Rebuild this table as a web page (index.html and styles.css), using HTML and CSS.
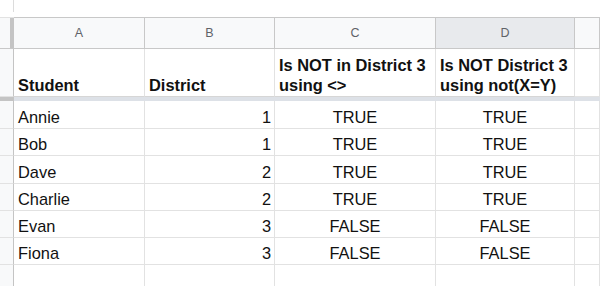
FILE: index.html
```html
<!DOCTYPE html>
<html>
<head>
<meta charset="utf-8">
<link rel="stylesheet" href="styles.css">
</head>
<body>
<div class="sheet">
  <div class="top rn"><span class="tick"></span></div>
  <div class="top span"></div>

  <div class="ch rn ch-rn"></div>
  <div class="ch">A</div>
  <div class="ch">B</div>
  <div class="ch">C</div>
  <div class="ch sel">D</div>
  <div class="ch">&nbsp;</div>

  <div class="rn"></div>
  <div class="cell hd">Student</div>
  <div class="cell hd">District</div>
  <div class="cell hd">Is NOT in District 3<br>using &lt;&gt;</div>
  <div class="cell hd">Is NOT District 3<br>using not(X=Y)</div>
  <div class="cell"></div>

  <div class="bar bar-rn"></div>
  <div class="bar bar-main"></div>

  <div class="rn"></div><div class="cell">Annie</div><div class="cell num">1</div><div class="cell mid">TRUE</div><div class="cell mid">TRUE</div><div class="cell"></div>
  <div class="rn"></div><div class="cell">Bob</div><div class="cell num">1</div><div class="cell mid">TRUE</div><div class="cell mid">TRUE</div><div class="cell"></div>
  <div class="rn"></div><div class="cell">Dave</div><div class="cell num">2</div><div class="cell mid">TRUE</div><div class="cell mid">TRUE</div><div class="cell"></div>
  <div class="rn"></div><div class="cell">Charlie</div><div class="cell num">2</div><div class="cell mid">TRUE</div><div class="cell mid">TRUE</div><div class="cell"></div>
  <div class="rn"></div><div class="cell">Evan</div><div class="cell num">3</div><div class="cell mid">FALSE</div><div class="cell mid">FALSE</div><div class="cell"></div>
  <div class="rn"></div><div class="cell">Fiona</div><div class="cell num">3</div><div class="cell mid">FALSE</div><div class="cell mid">FALSE</div><div class="cell"></div>
  <div class="rn"></div><div class="cell"></div><div class="cell"></div><div class="cell"></div><div class="cell"></div><div class="cell"></div>
</div>
</body>
</html>
```

FILE: styles.css
```css
html, body {
  margin: 0;
  padding: 0;
  background: #ffffff;
  overflow: hidden;
}

.sheet {
  width: 600px;
  height: 286px;
  overflow: hidden;
  display: grid;
  grid-template-columns: 14px 131px 130px 161px 139px 25px;
  grid-template-rows: 18px 31px 48px 4px 28px 27px 28px 27px 27px 27px 27px;
  font-family: "Liberation Sans", Arial, sans-serif;
  color: #111111;
}

.top {
  background: #ffffff;
  border-bottom: 1px solid #c8c8c8;
}
.top.span {
  grid-column: 2 / -1;
}
.tick {
  display: block;
  width: 13px;
  height: 12px;
  border-right: 1px solid #dcdcdc;
}
.top.rn {
  background: #ffffff;
  border-right: none;
}

.rn {
  background: #f8f9fa;
  border-right: 1px solid #c4c4c4;
  border-bottom: 1px solid #e2e2e2;
}

.ch {
  background: #f8f9fa;
  border-right: 1px solid #c8c8c8;
  border-bottom: 1px solid #c8c8c8;
  color: #5f6368;
  font-size: 12.5px;
  display: flex;
  align-items: center;
  justify-content: center;
}
.ch.sel {
  background: #e8eaed;
}
.ch-rn {
  border-right: 1px solid #c4c4c4;
  box-shadow: inset -3px 0 0 #c4c4c4;
}

.cell {
  background: #ffffff;
  border-right: 1px solid #e2e2e2;
  border-bottom: 1px solid #e2e2e2;
  font-size: 16.4px;
  line-height: 20px;
  display: flex;
  align-items: flex-end;
  padding: 0 3px 1px 4px;
  white-space: nowrap;
  overflow: hidden;
}
.cell.hd {
  font-weight: bold;
  padding-bottom: 1.5px;
  border-bottom-color: #d6d6d6;
}
.cell.num {
  justify-content: flex-end;
}
.cell.mid {
  justify-content: center;
  padding-left: 3px;
}

.bar-rn {
  background: #c4c4c4;
}
.bar-main {
  grid-column: 2 / -1;
  background: #dde1e7;
}
```
